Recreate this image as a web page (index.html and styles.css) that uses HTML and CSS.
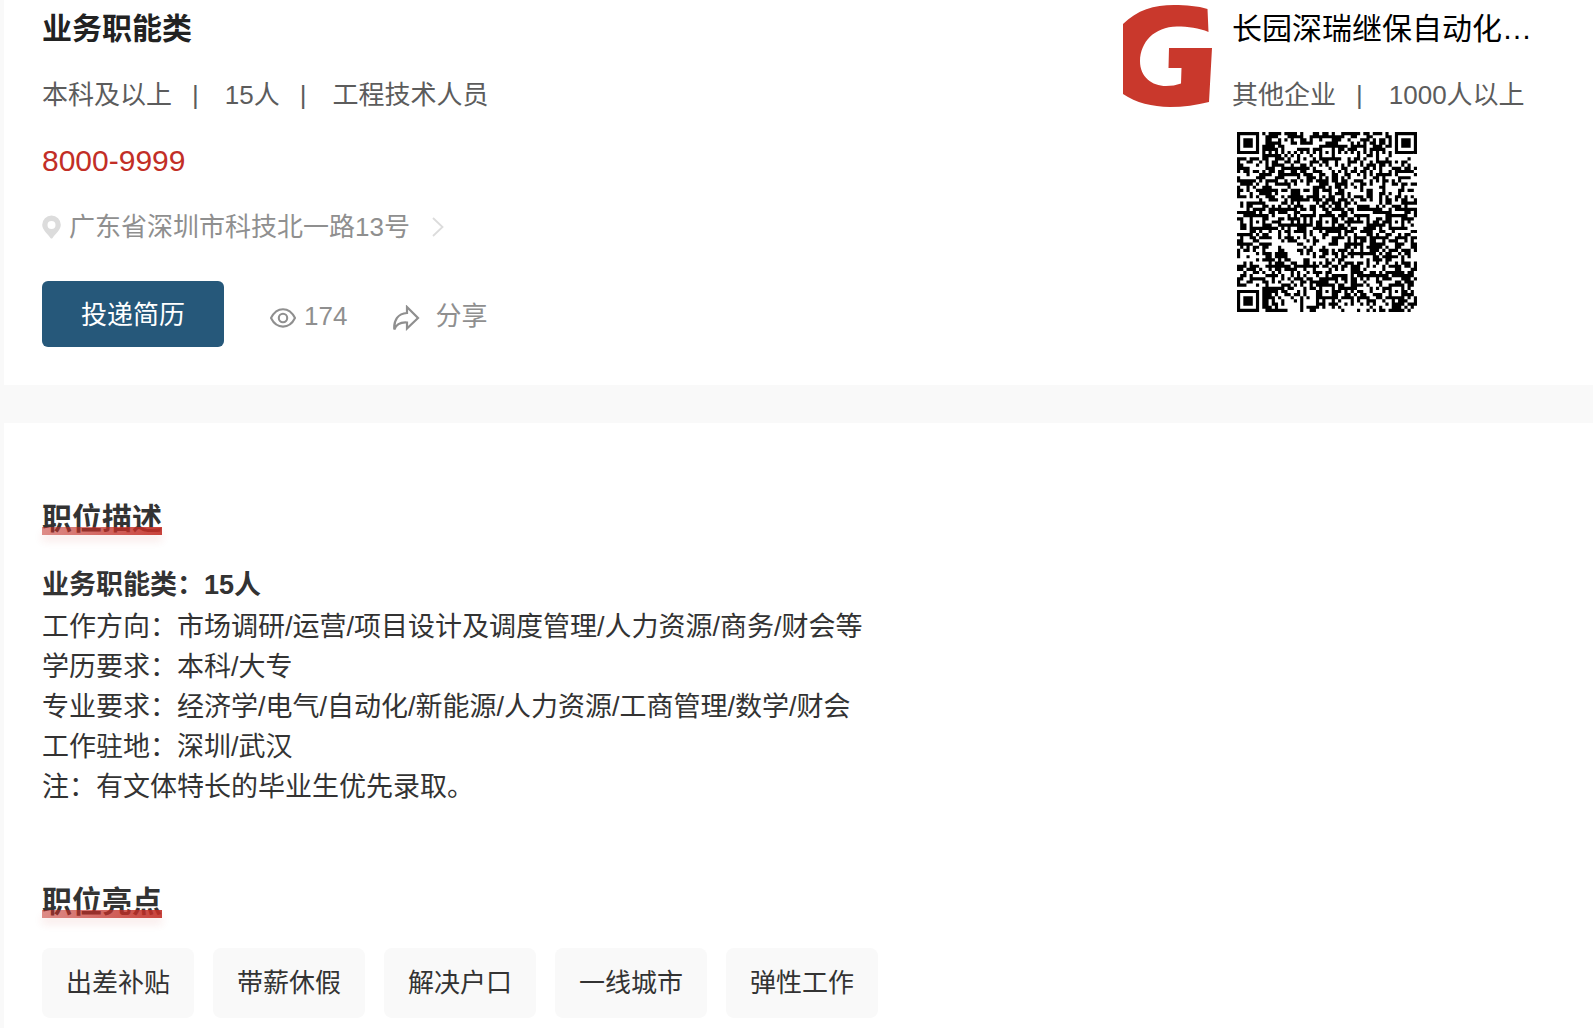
FILE: index.html
```
<!DOCTYPE html>
<html lang="zh-CN">
<head>
    <meta charset="UTF-8">
    <meta name="viewport" content="width=device-width, initial-scale=1.0">
    <title>业务职能类</title>
    <link rel="stylesheet" href="styles.css">
</head>
<body>
    <section class="card summary">
        <div class="job">
            <h1 class="job-title">业务职能类</h1>
            <p class="meta"><span>本科及以上</span><span class="sep">|</span><span>15人</span><span class="sep">|</span><span>工程技术人员</span></p>
            <p class="salary">8000-9999</p>
            <a class="address" href="#">
                <svg class="pin" viewBox="0 0 19 24" width="19" height="24">
                    <path fill-rule="evenodd" d="M9.500 0.500A9.300 9.300 0 0 0 0.200 9.800C0.200 15 6 19.500 8.400 22.900Q9.500 24.200 10.600 22.900C13 19.500 18.800 15 18.800 9.800A9.300 9.300 0 0 0 9.500 0.500ZM9.500 6a4 4 0 1 1 0 8a4 4 0 1 1 0-8Z" fill="#dcdcdc"/>
                </svg>
                <span>广东省深圳市科技北一路13号</span>
                <svg class="arrow" viewBox="0 0 12 20" width="12" height="20">
                    <path d="M1 1L10.500 10L1 19" fill="none" stroke="#dcdcdc" stroke-width="1.800"/>
                </svg>
            </a>
            <div class="actions">
                <button class="apply" type="button">投递简历</button>
                <span class="views">
                    <svg viewBox="0 0 26 20" width="26" height="20" fill="none" stroke="#8f8f8f" stroke-width="2.100">
                        <path d="M1 10C3.500 5 8 1.200 13 1.200S22.500 5 25 10C22.500 15 18 18.600 13 18.600S3.500 15 1 10Z"/>
                        <circle cx="13" cy="10" r="4.200"/>
                    </svg>
                    174
                </span>
                <button class="share" type="button">
                    <svg viewBox="0 0 27 26" width="27" height="26">
                        <path d="M14 2L25 13L14 23.500V17.500C7.500 17 3.500 19 1.300 24.500C0.600 15 5 8.500 14 8Z" fill="none" stroke="#8f8f8f" stroke-width="2.200"/>
                    </svg>
                    分享
                </button>
            </div>
        </div>
        <aside class="company">
            <svg class="logo" viewBox="0 0 89 102" width="89" height="102">
                <path fill="#c9382c" d="M0 19C14 5 31 0 51 0C63 0 75 1 84.500 4L85.500 27C76 23 65 21.500 54 21.500C31 22 17.500 37 17 56C17 72 29 81 43 81Q51 81 58 78.500L58.500 63H45.500L46 43H89L86 97C74 100 60 102 47 102C29 101.500 13 98 0 89Z"/>
            </svg>
            <div class="company-info">
                <h2 class="company-name">长园深瑞继保自动化…</h2>
                <p class="meta"><span>其他企业</span><span class="sep">|</span><span>1000人以上</span></p>
                <svg class="qr" id="qr" viewBox="0 0 57 57" width="180" height="180" role="img" aria-label="二维码"></svg>
            </div>
        </aside>
    </section>

    <section class="card detail">
        <h2 class="section-title">职位描述</h2>
        <div class="description">
            <p class="lead">业务职能类：15人</p>
            <p>工作方向：市场调研/运营/项目设计及调度管理/人力资源/商务/财会等</p>
            <p>学历要求：本科/大专</p>
            <p>专业要求：经济学/电气/自动化/新能源/人力资源/工商管理/数学/财会</p>
            <p>工作驻地：深圳/武汉</p>
            <p>注：有文体特长的毕业生优先录取。</p>
        </div>
        <h2 class="section-title">职位亮点</h2>
        <ul class="tags">
            <li>出差补贴</li>
            <li>带薪休假</li>
            <li>解决户口</li>
            <li>一线城市</li>
            <li>弹性工作</li>
        </ul>
    </section>

    <script src="script.js"></script>
</body>
</html>
```
FILE: styles.css
```
* {
    box-sizing: border-box;
}

body {
    margin: 0;
    padding-left: 4px;
    min-height: 100vh;
    display: flex;
    flex-direction: column;
    gap: 38px;
    background-color: #f9f9f9;
    color: #333;
    font-family: "Liberation Sans", "Noto Sans CJK SC", sans-serif;
    font-size: 26px;
    line-height: 40px;
}

h1, h2, p, ul {
    margin: 0;
    padding: 0;
}

button {
    border: none;
    font: inherit;
    cursor: pointer;
}

.card {
    background-color: #fff;
    padding: 0 38px;
}

.summary {
    display: flex;
    justify-content: space-between;
    padding-top: 9px;
    padding-bottom: 38px;
}

.job {
    display: flex;
    flex-direction: column;
    align-items: flex-start;
    gap: 26px;
}

.job-title {
    font-size: 30px;
    font-weight: 600;
    color: #222;
}

.meta {
    color: #5c5c5c;
}

.sep {
    margin: 0 26px 0 20px;
}

.salary {
    font-size: 30px;
    color: #c22e26;
}

.address {
    display: flex;
    align-items: center;
    color: #8f8f8f;
    text-decoration: none;
}

.pin {
    margin-right: 8px;
}

.arrow {
    margin-left: 22px;
}

.actions {
    display: flex;
    align-items: center;
    margin-top: 8px;
    color: #8f8f8f;
}

.apply {
    padding: 14px 39px 12px;
    border-radius: 6px;
    background-color: #26587a;
    color: #fff;
}

.views,
.share {
    display: flex;
    align-items: center;
    margin-left: 46px;
    padding: 4px 0 0;
}

.views svg,
.share svg {
    margin-top: 4px;
}

.views {
    gap: 8px;
}

.share {
    gap: 15px;
    background: none;
    color: inherit;
}

.company {
    display: flex;
    gap: 20px;
}

.logo {
    margin-top: -4px;
}

.company-info {
    width: 323px;
}

.company-name {
    margin-bottom: 26px;
    font-size: 30px;
    font-weight: 400;
    color: #000;
    white-space: nowrap;
}

.qr {
    display: block;
    margin: 17px 0 0 5px;
}

.detail {
    flex: 1;
    padding-top: 76px;
}

/* the red bar is laid over the lower edge of the heading */
.section-title {
    position: relative;
    width: fit-content;
    margin-bottom: 26px;
    font-size: 30px;
    font-weight: 600;
}

.section-title::after {
    content: "";
    position: absolute;
    left: 0;
    right: 0;
    bottom: 4px;
    height: 8px;
    background: linear-gradient(90deg, rgba(194, 46, 38, 0.55), rgba(194, 46, 38, 0.9));
    box-shadow: 0 6px 8px rgba(194, 46, 38, 0.1);
}

.description {
    margin-bottom: 75px;
    font-size: 27px;
}

.lead {
    margin-bottom: 2px;
    font-weight: 600;
}

.tags {
    display: flex;
    flex-wrap: wrap;
    gap: 19px;
    list-style: none;
}

.tags li {
    padding: 15px 24px;
    border-radius: 8px;
    background-color: #f9f9f9;
}
```
FILE: script.js
```
const size = 57;
const qr = document.getElementById('qr');
let seed = 174;

function random() {
    seed = (seed * 1103515245 + 12345) % 2147483648;
    return seed / 2147483648;
}

// Square rings around a centre: 3 for a corner mark, 2 for an alignment mark
function ring(x, y, cx, cy) {
    return Math.max(Math.abs(x - cx), Math.abs(y - cy));
}

// Placeholder code: the marks are real, the modules between them are filler
function isDark(x, y, noise) {
    const corners = [[3, 3], [size - 4, 3], [3, size - 4]];
    for (const [cx, cy] of corners) {
        const r = ring(x, y, cx, cy);
        if (r <= 4) return r === 3 || r <= 1;
    }
    const marks = [[28, 6], [50, 28], [6, 28], [28, 28], [28, 50], [50, 50]];
    for (const [cx, cy] of marks) {
        const r = ring(x, y, cx, cy);
        if (r <= 2) return r !== 1;
    }
    if (x === 6 || y === 6) return (x + y) % 2 === 0;
    return noise > 0.48;
}

let d = '';
for (let y = 0; y < size; y++) {
    for (let x = 0; x < size; x++) {
        if (isDark(x, y, random())) {
            d += `M${x} ${y}h1v1h-1z`;
        }
    }
}

const path = document.createElementNS('http://www.w3.org/2000/svg', 'path');
path.setAttribute('d', d);
qr.appendChild(path);
```
